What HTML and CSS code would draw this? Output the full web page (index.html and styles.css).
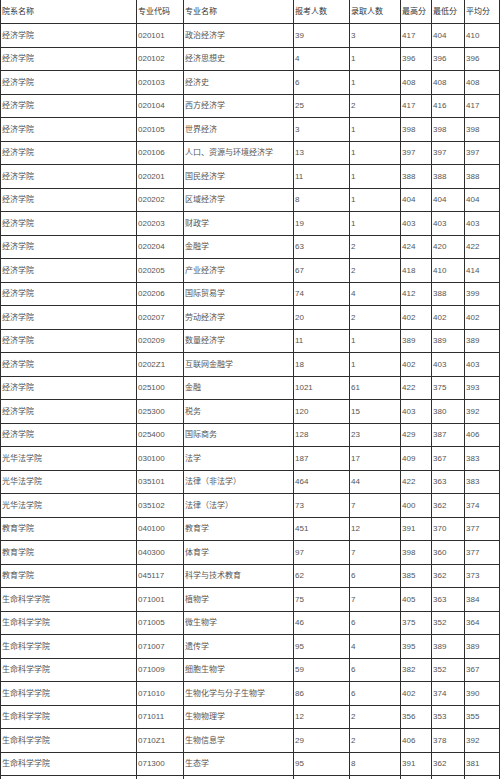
FILE: index.html
```html
<!DOCTYPE html>
<html lang="zh">
<head>
<meta charset="utf-8">
<link rel="stylesheet" href="styles.css">
</head>
<body>
<table class="scores">
<colgroup>
<col class="c1"><col class="c2"><col class="c3"><col class="c4"><col class="c5"><col class="c6"><col class="c7"><col class="c8">
</colgroup>
<thead>
<tr class="head"><td>院系名称</td><td>专业代码</td><td>专业名称</td><td>报考人数</td><td>录取人数</td><td>最高分</td><td>最低分</td><td>平均分</td></tr>
</thead>
<tbody>
<tr><td>经济学院</td><td>020101</td><td>政治经济学</td><td>39</td><td>3</td><td>417</td><td>404</td><td>410</td></tr>
<tr><td>经济学院</td><td>020102</td><td>经济思想史</td><td>4</td><td>1</td><td>396</td><td>396</td><td>396</td></tr>
<tr><td>经济学院</td><td>020103</td><td>经济史</td><td>6</td><td>1</td><td>408</td><td>408</td><td>408</td></tr>
<tr><td>经济学院</td><td>020104</td><td>西方经济学</td><td>25</td><td>2</td><td>417</td><td>416</td><td>417</td></tr>
<tr><td>经济学院</td><td>020105</td><td>世界经济</td><td>3</td><td>1</td><td>398</td><td>398</td><td>398</td></tr>
<tr><td>经济学院</td><td>020106</td><td>人口、资源与环境经济学</td><td>13</td><td>1</td><td>397</td><td>397</td><td>397</td></tr>
<tr><td>经济学院</td><td>020201</td><td>国民经济学</td><td>11</td><td>1</td><td>388</td><td>388</td><td>388</td></tr>
<tr><td>经济学院</td><td>020202</td><td>区域经济学</td><td>8</td><td>1</td><td>404</td><td>404</td><td>404</td></tr>
<tr><td>经济学院</td><td>020203</td><td>财政学</td><td>19</td><td>1</td><td>403</td><td>403</td><td>403</td></tr>
<tr><td>经济学院</td><td>020204</td><td>金融学</td><td>63</td><td>2</td><td>424</td><td>420</td><td>422</td></tr>
<tr><td>经济学院</td><td>020205</td><td>产业经济学</td><td>67</td><td>2</td><td>418</td><td>410</td><td>414</td></tr>
<tr><td>经济学院</td><td>020206</td><td>国际贸易学</td><td>74</td><td>4</td><td>412</td><td>388</td><td>399</td></tr>
<tr><td>经济学院</td><td>020207</td><td>劳动经济学</td><td>20</td><td>2</td><td>402</td><td>402</td><td>402</td></tr>
<tr><td>经济学院</td><td>020209</td><td>数量经济学</td><td>11</td><td>1</td><td>389</td><td>389</td><td>389</td></tr>
<tr><td>经济学院</td><td>0202Z1</td><td>互联网金融学</td><td>18</td><td>1</td><td>402</td><td>403</td><td>403</td></tr>
<tr><td>经济学院</td><td>025100</td><td>金融</td><td>1021</td><td>61</td><td>422</td><td>375</td><td>393</td></tr>
<tr><td>经济学院</td><td>025300</td><td>税务</td><td>120</td><td>15</td><td>403</td><td>380</td><td>392</td></tr>
<tr><td>经济学院</td><td>025400</td><td>国际商务</td><td>128</td><td>23</td><td>429</td><td>387</td><td>406</td></tr>
<tr><td>光华法学院</td><td>030100</td><td>法学</td><td>187</td><td>17</td><td>409</td><td>367</td><td>383</td></tr>
<tr><td>光华法学院</td><td>035101</td><td>法律（非法学）</td><td>464</td><td>44</td><td>422</td><td>363</td><td>383</td></tr>
<tr><td>光华法学院</td><td>035102</td><td>法律（法学）</td><td>73</td><td>7</td><td>400</td><td>362</td><td>374</td></tr>
<tr><td>教育学院</td><td>040100</td><td>教育学</td><td>451</td><td>12</td><td>391</td><td>370</td><td>377</td></tr>
<tr><td>教育学院</td><td>040300</td><td>体育学</td><td>97</td><td>7</td><td>398</td><td>360</td><td>377</td></tr>
<tr><td>教育学院</td><td>045117</td><td>科学与技术教育</td><td>62</td><td>6</td><td>385</td><td>362</td><td>373</td></tr>
<tr><td>生命科学学院</td><td>071001</td><td>植物学</td><td>75</td><td>7</td><td>405</td><td>363</td><td>384</td></tr>
<tr><td>生命科学学院</td><td>071005</td><td>微生物学</td><td>46</td><td>6</td><td>375</td><td>352</td><td>364</td></tr>
<tr><td>生命科学学院</td><td>071007</td><td>遗传学</td><td>95</td><td>4</td><td>395</td><td>389</td><td>389</td></tr>
<tr><td>生命科学学院</td><td>071009</td><td>细胞生物学</td><td>59</td><td>6</td><td>382</td><td>352</td><td>367</td></tr>
<tr><td>生命科学学院</td><td>071010</td><td>生物化学与分子生物学</td><td>86</td><td>6</td><td>402</td><td>374</td><td>390</td></tr>
<tr><td>生命科学学院</td><td>071011</td><td>生物物理学</td><td>12</td><td>2</td><td>356</td><td>353</td><td>355</td></tr>
<tr><td>生命科学学院</td><td>0710Z1</td><td>生物信息学</td><td>29</td><td>2</td><td>406</td><td>378</td><td>392</td></tr>
<tr><td>生命科学学院</td><td>071300</td><td>生态学</td><td>95</td><td>8</td><td>391</td><td>362</td><td>381</td></tr>
<tr class="cut"><td></td><td></td><td></td><td></td><td></td><td></td><td></td><td></td></tr>
</tbody>
</table>
</body>
</html>
```
FILE: styles.css
```css
html, body {
  margin: 0;
  padding: 0;
  background: #ffffff;
  overflow: hidden;
}

.scores {
  border-collapse: collapse;
  table-layout: fixed;
  width: 500px;
  font-family: "Liberation Sans", "Noto Sans CJK SC", sans-serif;
  font-size: 8px;
  color: #555555;
}

.c1 { width: 136px; }
.c2 { width: 47px; }
.c3 { width: 110px; }
.c4 { width: 56px; }
.c5 { width: 51px; }
.c6 { width: 31px; }
.c7 { width: 33px; }
.c8 { width: 35px; }

.scores td {
  border: 1px solid #2e2e2e;
  padding: 0 0 0 1px;
  height: 22.5px;
  white-space: nowrap;
  overflow: hidden;
  vertical-align: middle;
  line-height: 11px;
}

.scores .head td {
  border-top: none;
  height: 23px;
  color: #333333;
}
```
